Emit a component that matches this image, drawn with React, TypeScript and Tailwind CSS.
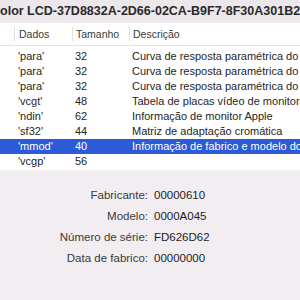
const rows = [
  { tag: "'para'", size: 32, desc: "Curva de resposta paramétrica do tom" },
  { tag: "'para'", size: 32, desc: "Curva de resposta paramétrica do tom" },
  { tag: "'para'", size: 32, desc: "Curva de resposta paramétrica do tom" },
  { tag: "'vcgt'", size: 48, desc: "Tabela de placas vídeo de monitores" },
  { tag: "'ndin'", size: 62, desc: "Informação de monitor Apple" },
  { tag: "'sf32'", size: 44, desc: "Matriz de adaptação cromática" },
  { tag: "'mmod'", size: 40, desc: "Informação de fabrico e modelo do monitor", selected: true },
  { tag: "'vcgp'", size: 56, desc: "" },
];

const details = [
  { label: "Fabricante:", value: "00000610" },
  { label: "Modelo:", value: "0000A045" },
  { label: "Número de série:", value: "FD626D62" },
  { label: "Data de fabrico:", value: "00000000" },
];

export default function App() {
  return (
    <div className="w-[300px] h-[300px] overflow-hidden bg-[#f1edf0] font-['Liberation_Sans',Arial,sans-serif] text-[#262626]">
      <div className="h-[23px] bg-[#ebe7ea] flex items-center overflow-hidden">
        <span className="-ml-[9px] whitespace-nowrap text-[12.5px] font-bold text-[#2a2a2a]">
          Color LCD-37D8832A-2D66-02CA-B9F7-8F30A301B23F
        </span>
      </div>

      <div className="bg-white h-[147px] overflow-hidden">
        <div className="h-[23px] flex items-center border-b border-[#e4e4e4] text-[10.5px] text-[#3a3a3a]">
          <div className="w-[14px] h-[14px]" />
          <div className="w-[58px] h-[14px] border-l border-[#dedede] pl-[4px] leading-[14px]">Dados</div>
          <div className="w-[57px] h-[14px] border-l border-[#dedede] pl-[3px] leading-[14px]">Tamanho</div>
          <div className="flex-1 h-[14px] border-l border-[#dedede] pl-[3px] leading-[14px] whitespace-nowrap">Descrição</div>
        </div>
        <div className="pt-[3px]">
          {rows.map((r, i) => (
            <div
              key={i}
              className={`h-[15px] flex items-center text-[11px] whitespace-nowrap ${
                r.selected ? "bg-[#2b5bd6] text-white" : "text-[#262626]"
              }`}
            >
              <div className="w-[18px] shrink-0" />
              <div className="w-[57px] shrink-0">{r.tag}</div>
              <div className="w-[57px] shrink-0">{r.size}</div>
              <div className="flex-1 overflow-hidden">{r.desc}</div>
            </div>
          ))}
        </div>
      </div>

      <div className="pt-[18px] flex flex-col gap-[6px] text-[11.5px]">
        {details.map((d, i) => (
          <div key={i} className="flex h-[15px] items-center">
            <div className="w-[148px] text-right text-[#3a3a3a]">{d.label}</div>
            <div className="pl-[6px] text-[#1e1e1e]">{d.value}</div>
          </div>
        ))}
      </div>
    </div>
  );
}
